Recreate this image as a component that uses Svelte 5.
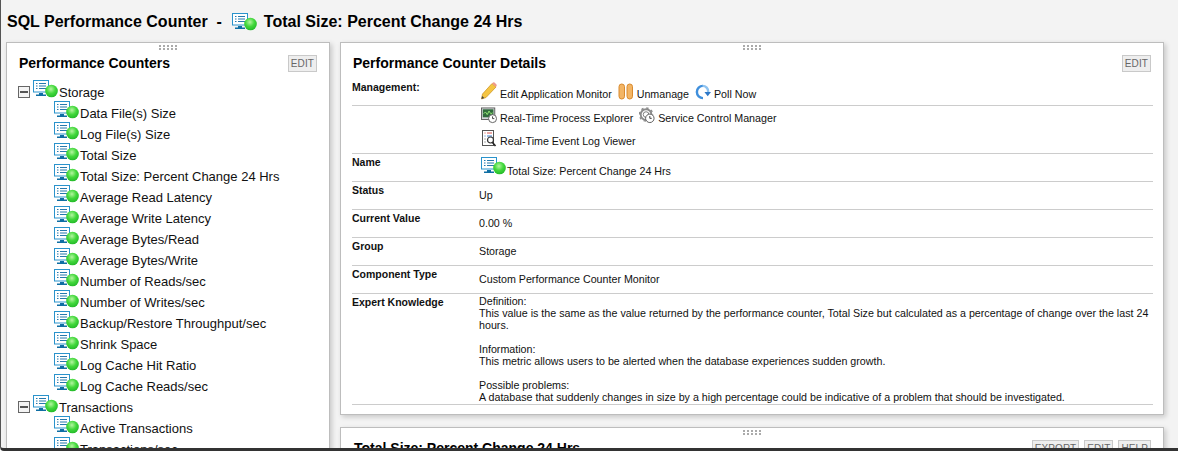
<script>
	const storage = [
		'Data File(s) Size',
		'Log File(s) Size',
		'Total Size',
		'Total Size: Percent Change 24 Hrs',
		'Average Read Latency',
		'Average Write Latency',
		'Average Bytes/Read',
		'Average Bytes/Write',
		'Number of Reads/sec',
		'Number of Writes/sec',
		'Backup/Restore Throughput/sec',
		'Shrink Space',
		'Log Cache Hit Ratio',
		'Log Cache Reads/sec'
	];
	const transactions = ['Active Transactions', 'Transactions/sec'];
	const groups = [
		{ name: 'Storage', items: storage },
		{ name: 'Transactions', items: transactions }
	];
	const simpleRows = [
		{ label: 'Status', value: 'Up' },
		{ label: 'Current Value', value: '0.00 %' },
		{ label: 'Group', value: 'Storage' },
		{ label: 'Component Type', value: 'Custom Performance Counter Monitor' }
	];
</script>

{#snippet monitor()}
	<svg class="monitor" width="25" height="18" viewBox="0 0 25 18">
		<rect x="0.5" y="0.5" width="15" height="11.5" fill="#fff" stroke="#2a93cc" />
		<path d="M3 3.5h1.500M6 3.500h7M3 6h1.500M6 6h7M3 8.500h1.500M6 8.500h7" stroke="#2679ad" fill="none" />
		<path d="M6 13h4v1.500H6zM3 14.500h10V16H3z" fill="#0f6ea3" />
		<defs>
			<radialGradient id="ball" cx="0.45" cy="0.35" r="0.7">
				<stop offset="0" stop-color="#b4f5a0" />
				<stop offset="0.5" stop-color="#43d83c" />
				<stop offset="1" stop-color="#1fb526" />
			</radialGradient>
		</defs>
		<circle cx="18.500" cy="11" r="6.300" fill="url(#ball)" />
	</svg>
{/snippet}

{#snippet grip()}
	<div class="grip">
		{#each Array(10) as _}<i></i>{/each}
	</div>
{/snippet}

<div class="window">
	<h1>
		<span>SQL Performance Counter&nbsp; -</span>
		{@render monitor()}
		<span>Total Size: Percent Change 24 Hrs</span>
	</h1>

	<div class="columns">
		<section class="panel tree-panel">
			{@render grip()}
			<header>
				<h2>Performance Counters</h2>
				<div class="btns"><button>EDIT</button></div>
			</header>
			<div class="tree">
				{#each groups as group}
					<div class="row parent">
						<span class="toggle"></span>
						{@render monitor()}
						<span>{group.name}</span>
					</div>
					{#each group.items as item}
						<div class="row child">
							{@render monitor()}
							<span>{item}</span>
						</div>
					{/each}
				{/each}
			</div>
		</section>

		<div class="main">
			<section class="panel details">
				{@render grip()}
				<header>
					<h2>Performance Counter Details</h2>
					<div class="btns"><button>EDIT</button></div>
				</header>
				<div class="table">
					<div class="tr mgmt-top">
						<div class="label">Management:</div>
						<div class="links">
							<span class="link">
								<svg width="16" height="18" viewBox="0 0 16 18">
									<path d="M0.500 17l1-5L11 1.500l4 3.500L5 15.500z" fill="#f5c542" stroke="#c98f1c" stroke-width="0.700" />
									<path d="M11 1.500l1-1q.8-.5 1.500 0l2 2q.5.8 0 1.500L15 5z" fill="#ee9a8a" />
									<path d="M0.500 17l.6-3 2.200 2z" fill="#444" />
								</svg>
								Edit Application Monitor
							</span>
							<span class="link">
								<svg width="16" height="17" viewBox="0 0 16 17">
									<rect x="1" y="1" width="5.500" height="15" rx="2.700" fill="#f3b565" stroke="#d98a2e" />
									<rect x="9" y="1" width="5.500" height="15" rx="2.700" fill="#f3b565" stroke="#d98a2e" />
								</svg>
								Unmanage
							</span>
							<span class="link">
								<svg width="16" height="16" viewBox="0 0 17 16">
									<path d="M8.500 1.500a6.500 6.500 0 1 0 0 13" fill="none" stroke="#3f8fdc" stroke-width="2.600" />
									<path d="M8 1.500a6 6 0 0 1 6 6.500" fill="none" stroke="#8fc3f0" stroke-width="2.600" />
									<path d="M10 8h7l-3.500 4.500z" fill="#2d78c8" />
								</svg>
								Poll Now
							</span>
						</div>
					</div>
					<div class="tr mgmt-more">
						<div class="label"></div>
						<div class="stack">
							<div class="links">
								<span class="link">
									<svg width="16" height="17" viewBox="0 0 18 18">
										<rect x="0.500" y="0.500" width="15" height="13" fill="#d5d9dc" stroke="#555" />
										<rect x="2" y="2" width="12" height="9" fill="#2f6b3c" />
										<path d="M3 7l2-2 2 3 2-4 2 3 2-1" stroke="#9df07a" fill="none" />
										<circle cx="13" cy="12.500" r="4.500" fill="#fff" stroke="#555" />
										<path d="M13 10v2.500h2" stroke="#333" fill="none" />
									</svg>
									Real-Time Process Explorer
								</span>
								<span class="link">
									<svg width="16" height="17" viewBox="0 0 17 17">
										<circle cx="7.500" cy="7.500" r="5.700" fill="none" stroke="#8b8b8b" stroke-width="2" />
										<circle cx="7.500" cy="7.500" r="7" fill="none" stroke="#8b8b8b" stroke-width="1.500" stroke-dasharray="2.500 3" />
										<circle cx="7.500" cy="7.500" r="3" fill="#fff" stroke="#777" />
										<circle cx="11.500" cy="11.500" r="4.500" fill="#fff" stroke="#555" />
										<path d="M11.500 9v2.500h2" stroke="#333" fill="none" />
									</svg>
									Service Control Manager
								</span>
							</div>
							<div class="links">
								<span class="link">
									<svg width="16" height="17" viewBox="0 0 16 17">
										<rect x="1.500" y="0.500" width="11" height="15" fill="#fff" stroke="#555" />
										<path d="M3.500 3h1M6 3h5" stroke="#d9534f" />
										<path d="M3.500 6h1M6 6h5" stroke="#3a7bc8" />
										<path d="M3.500 9h1M3.500 12h1" stroke="#555" />
										<circle cx="9.500" cy="10" r="3" fill="#fff" stroke="#333" stroke-width="1.200" />
										<path d="M11.500 12.500l3 3.500" stroke="#222" stroke-width="1.600" />
									</svg>
									Real-Time Event Log Viewer
								</span>
							</div>
						</div>
					</div>
					<div class="tr name-row">
						<div class="label">Name</div>
						<div class="value name-value">
							{@render monitor()}
							<span>Total Size: Percent Change 24 Hrs</span>
						</div>
					</div>
					{#each simpleRows as row}
						<div class="tr simple">
							<div class="label">{row.label}</div>
							<div class="value">{row.value}</div>
						</div>
					{/each}
					<div class="tr expert">
						<div class="label">Expert Knowledge</div>
						<div class="value">
							<p>Definition:<br />This value is the same as the value returned by the performance counter, Total Size but calculated as a percentage of change over the last 24 hours.</p>
							<p>Information:<br />This metric allows users to be alerted when the database experiences sudden growth.</p>
							<p>Possible problems:<br />A database that suddenly changes in size by a high percentage could be indicative of a problem that should be investigated.</p>
						</div>
					</div>
				</div>
			</section>

			<section class="panel chart">
				{@render grip()}
				<header>
					<h2>Total Size: Percent Change 24 Hrs</h2>
					<div class="btns">
						<button>EXPORT</button>
						<button>EDIT</button>
						<button>HELP</button>
					</div>
				</header>
			</section>
		</div>
	</div>
</div>

<style>
	:global(body) {
		margin: 0;
		background: #fff;
		font-family: 'Liberation Sans', Arial, sans-serif;
	}

	.window {
		box-sizing: border-box;
		height: 451px;
		overflow: hidden;
		background: #f3f3f3;
		border-left: 1px solid #555;
		border-bottom: 3px solid #333;
		border-bottom-left-radius: 4px;
		color: #111;
	}

	h1 {
		display: flex;
		align-items: center;
		gap: 10px;
		height: 42px;
		margin: 0;
		padding: 2px 0 0 6px;
		box-sizing: border-box;
		font-size: 16px;
		font-weight: bold;
		color: #000;
		white-space: pre;
	}

	h1 .monitor {
		margin: 0 -3px 0 0;
	}

	.columns {
		display: flex;
		align-items: flex-start;
		gap: 10px;
		padding-left: 5px;
	}

	.panel {
		position: relative;
		box-sizing: border-box;
		background: #fff;
		border: 1px solid #bdbdbd;
		box-shadow: 2px 2px 5px rgba(0, 0, 0, 0.18);
	}

	.grip {
		position: absolute;
		top: 2px;
		left: 50%;
		margin-left: -9px;
		display: grid;
		grid-template-columns: repeat(5, 2px);
		gap: 1px 2px;
	}

	.grip i {
		width: 2px;
		height: 2px;
		background: #aaa;
	}

	.panel header {
		display: flex;
		justify-content: space-between;
		align-items: flex-start;
	}

	h2 {
		margin: 0;
		font-size: 14px;
		font-weight: bold;
		color: #000;
	}

	.btns {
		display: flex;
		gap: 5px;
	}

	button {
		height: 17px;
		padding: 0 2px;
		border: 1px solid #c9c9c9;
		background: #eee;
		color: #666;
		font: 10px 'Liberation Sans', Arial, sans-serif;
		letter-spacing: 0.1px;
	}

	.tree-panel {
		width: 324px;
		height: 420px;
		flex: none;
	}

	.tree-panel header {
		padding: 12px 12px 0 12px;
		height: 24px;
	}

	.tree {
		padding: 0 0 0 11px;
	}

	.row {
		display: flex;
		align-items: flex-end;
		height: 21px;
		font-size: 13px;
		white-space: nowrap;
	}

	.row .monitor {
		margin: 0 1px 2px 0;
	}

	.parent .toggle {
		box-sizing: border-box;
		width: 12px;
		height: 12px;
		margin: 0 3px 2px 0;
		border: 1px solid #666;
		background: linear-gradient(#555, #555) center / 8px 2px no-repeat #f4f4f4;
	}

	.row.child {
		padding-left: 36px;
	}

	.main {
		width: 824px;
		flex: none;
		display: flex;
		flex-direction: column;
		gap: 12px;
	}

	.details {
		height: 373px;
		padding: 12px 10px 0 11px;
	}

	.details header {
		height: 25px;
	}

	.details h2 {
		padding-left: 1px;
	}

	.details .btns {
		margin-right: 2px;
	}

	.table {
		font-size: 10.700px;
	}

	.tr {
		display: grid;
		grid-template-columns: 127px 1fr;
		border-bottom: 1px solid #ccc;
		line-height: 12px;
	}

	.label {
		font-weight: bold;
		color: #111;
		font-size: 10.500px;
	}

	.links {
		display: flex;
		gap: 6px;
		align-items: flex-end;
		white-space: nowrap;
		margin-left: 2px;
	}

	.link {
		display: flex;
		align-items: flex-end;
		gap: 3px;
	}

	.mgmt-top {
		height: 25px;
	}

	.mgmt-top .label {
		padding-top: 1px;
	}

	.mgmt-top .links {
		height: 20px;
	}

	.mgmt-more {
		height: 47px;
	}

	.stack {
		display: flex;
		flex-direction: column;
		gap: 6px;
		padding-top: 1px;
	}

	.name-row {
		height: 28px;
		padding-top: 2px;
		box-sizing: border-box;
	}

	.name-value {
		display: flex;
		align-items: flex-start;
		padding-left: 2px;
	}

	.name-value .monitor {
		margin: 1px 1px 0 0;
	}

	.name-value span {
		margin-top: 9px;
	}

	.simple {
		height: 28px;
		box-sizing: border-box;
		padding-top: 2px;
	}

	.simple .value {
		padding-top: 5px;
	}

	.expert {
		padding-top: 1px;
		padding-bottom: 1px;
	}

	.expert .label {
		padding-top: 1px;
	}

	p {
		margin: 0 0 12px;
	}

	p:last-child {
		margin-bottom: 0;
	}

	.chart {
		height: 80px;
		padding: 12px 12px 0 13px;
	}
</style>
